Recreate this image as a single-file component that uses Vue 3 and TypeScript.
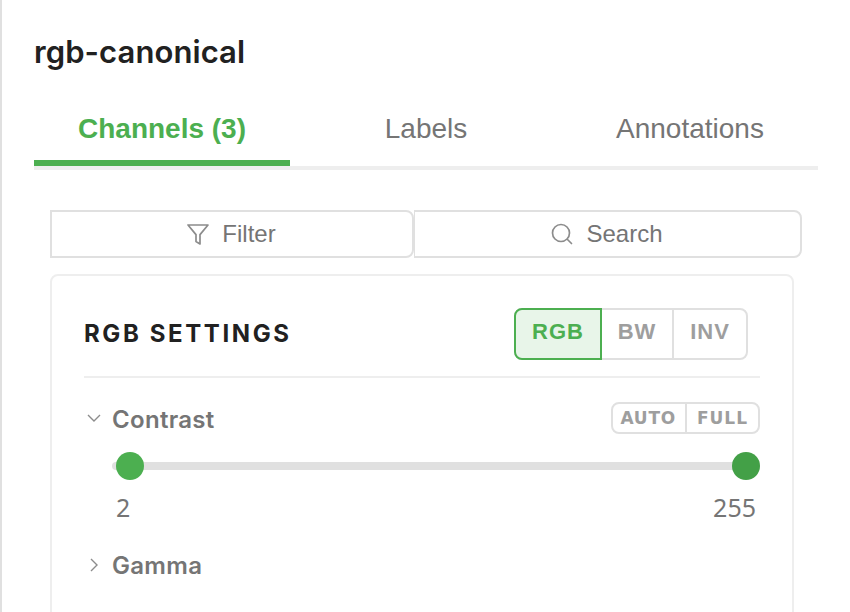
<script setup lang="ts">
const tabs = ['Channels (3)', 'Labels', 'Annotations']
const modes = ['RGB', 'BW', 'INV']
</script>

<template>
  <div class="panel">
    <h1 class="title">rgb-canonical</h1>
    <div class="tabs">
      <div v-for="(t, i) in tabs" :key="t" class="tab" :class="{ active: i === 0 }">{{ t }}</div>
    </div>
    <div class="body">
      <div class="tools">
        <button class="tool filter">
          <svg width="24" height="24" viewBox="0 0 24 24" fill="none" stroke="#8c8c8c" stroke-width="1.7" stroke-linejoin="round"><path d="M2 3h20l-8 9.6V22l-4-2.4v-7z" /></svg>
          <span>Filter</span>
        </button>
        <button class="tool search">
          <svg width="24" height="24" viewBox="0 0 24 24" fill="none" stroke="#8c8c8c" stroke-width="1.7" stroke-linecap="round"><circle cx="11" cy="11" r="8.5" /><path d="M17.5 17.5L21.5 21.5" /></svg>
          <span>Search</span>
        </button>
      </div>
      <section class="card">
        <header class="card-head">
          <h2>RGB SETTINGS</h2>
          <div class="modes">
            <div v-for="(m, i) in modes" :key="m" class="mode" :class="{ on: i === 0 }">{{ m }}</div>
          </div>
        </header>
        <div class="row">
          <svg class="chev" width="18" height="18" viewBox="0 0 18 18" fill="none" stroke="#8c8c8c" stroke-width="1.4"><path d="M4 6l6 6 6-6" /></svg>
          <span class="label">Contrast</span>
          <div class="mini">
            <span>AUTO</span><span>FULL</span>
          </div>
        </div>
        <div class="slider">
          <div class="track"></div>
          <div class="thumb left"></div>
          <div class="thumb right"></div>
        </div>
        <div class="values"><span>2</span><span>255</span></div>
        <div class="row gamma">
          <svg class="chev" width="18" height="18" viewBox="0 0 18 18" fill="none" stroke="#8c8c8c" stroke-width="1.4"><path d="M7 4l6 6-6 6" /></svg>
          <span class="label">Gamma</span>
        </div>
      </section>
    </div>
  </div>
</template>

<style>
html, body { margin: 0; background: #fff; }
</style>

<style scoped>
.panel {
  box-sizing: border-box;
  width: 850px;
  height: 612px;
  overflow: hidden;
  border-left: 2px solid #e0e0e0;
  padding: 32px 32px 0 32px;
  font-family: "Liberation Sans", Arial, sans-serif;
  background: #fff;
}
.title {
  margin: 0;
  font-family: Inter, sans-serif;
  font-size: 31px;
  line-height: 40px;
  font-weight: 600;
  letter-spacing: 0.08px;
  color: #212121;
}
.tabs {
  display: flex;
  margin-top: 32px;
  width: 784px;
  border-bottom: 4px solid #eeeeee;
  height: 62px;
}
.tab {
  flex: 0 0 256px;
  height: 62px;
  line-height: 50px;
  text-align: center;
  font-size: 28px;
  color: #757575;
  box-sizing: border-box;
}
.tab:nth-child(2) { flex-basis: 272px; }
.tab.active {
  color: #4caf50;
  font-weight: 700;
  border-bottom: 6px solid #4caf50;
}
.body { padding: 40px 0 0 16px; }
.tools { display: flex; width: 752px; }
.tool {
  box-sizing: border-box;
  height: 48px;
  display: flex;
  align-items: center;
  justify-content: center;
  gap: 12px;
  padding: 0 2px 0 0;
  background: #fff;
  border: 2px solid #e0e0e0;
  font-family: "Liberation Sans", Arial, sans-serif;
  font-size: 24px;
  color: #757575;
}
.filter { width: 364px; border-radius: 0 8px 8px 0; }
.search { width: 388px; border-left-width: 1px; border-radius: 0 8px 8px 0; }
.card {
  box-sizing: border-box;
  width: 744px;
  height: 400px;
  margin: 16px 0 0 0;
  border: 2px solid #eeeeee;
  border-radius: 8px;
  padding: 32px 32px 0;
}
.card-head {
  display: flex;
  justify-content: space-between;
  align-items: flex-start;
  height: 70px;
  box-sizing: border-box;
  border-bottom: 2px solid #eeeeee;
  padding-right: 12px;
}
.card-head h2 {
  margin: 0;
  font-family: Inter, sans-serif;
  font-size: 24px;
  font-weight: 700;
  letter-spacing: 2.6px;
  line-height: 52px;
  color: #212121;
}
.modes {
  display: flex;
  height: 52px;
  box-sizing: border-box;
  border: 2px solid #e0e0e0;
  border-radius: 8px;
}
.mode {
  font-size: 22px;
  font-weight: 700;
  letter-spacing: 1px;
  color: #9e9e9e;
  line-height: 44px;
  width: 70px;
  text-align: center;
}
.mode + .mode + .mode { width: 72px; border-left: 2px solid #e0e0e0; }
.mode.on {
  box-sizing: border-box;
  width: 88px;
  height: 52px;
  margin: -2px 0 -2px -2px;
  color: #4caf50;
  background: #e8f5e9;
  border: 2px solid #4caf50;
  border-radius: 8px 0 0 8px;
}
.row {
  display: flex;
  align-items: center;
  height: 32px;
  margin-top: 24px;
}
.chev { margin-right: 10px; flex: none; }
.label {
  font-family: Inter, sans-serif;
  font-size: 24px;
  font-weight: 600;
  letter-spacing: 0.3px;
  color: #757575;
  padding-top: 2px;
}
.mini {
  margin-left: auto;
  display: flex;
  height: 32px;
  box-sizing: border-box;
  border: 2px solid #e0e0e0;
  border-radius: 8px;
}
.mini span {
  font-family: "DejaVu Sans", sans-serif;
  font-size: 17px;
  font-weight: 700;
  letter-spacing: 1px;
  color: #9e9e9e;
  line-height: 28px;
  padding: 0 10px;
}
.mini span:first-child { padding: 0 8.8px 0 7px; letter-spacing: 0.8px; }
.mini span + span { border-left: 2px solid #e0e0e0; }
.slider {
  position: relative;
  height: 28px;
  margin: 18px 0 0 28px;
}
.track {
  position: absolute;
  left: 0;
  right: 0;
  top: 10px;
  height: 8px;
  border-radius: 4px;
  background: #e0e0e0;
}
.thumb {
  position: absolute;
  top: 0;
  width: 28px;
  height: 28px;
  border-radius: 50%;
  background: #4caf50;
}
.thumb.left { left: 4px; }
.thumb.right { right: 0; background: #43a047; }
.values {
  display: flex;
  justify-content: space-between;
  margin: 10px 4px 0 32px;
  font-family: "Noto Sans", sans-serif;
  font-size: 25px;
  line-height: 34px;
  color: #757575;
}
.gamma { margin-top: 24px; }
</style>
